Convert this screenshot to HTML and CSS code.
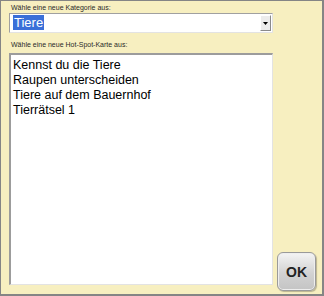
FILE: index.html
```html
<!DOCTYPE html>
<html lang="de">
<head>
  <meta charset="UTF-8">
  <title>Hot-Spot-Karte wählen</title>
  <link rel="stylesheet" href="styles.css">
</head>
<body>
  <div class="dialog">
    <label class="caption">Wähle eine neue Kategorie aus:</label>
    <div class="combo">
      <span class="combo-value"><span class="selected">Tiere</span></span>
      <span class="combo-button">
        <svg viewBox="0 0 5 3" width="5" height="3"><path d="M0 0h5L2.5 3z" fill="#000"/></svg>
      </span>
    </div>

    <label class="caption second">Wähle eine neue Hot-Spot-Karte aus:</label>
    <div class="body-row">
      <ul class="listbox">
        <li>Kennst du die Tiere</li>
        <li>Raupen unterscheiden</li>
        <li>Tiere auf dem Bauernhof</li>
        <li>Tierrätsel 1</li>
      </ul>
      <button class="ok-button">OK</button>
    </div>
  </div>
</body>
</html>
```

FILE: styles.css
```css
body {
  margin: 0;
  font-family: 'Liberation Sans', Arial, sans-serif;
}

.dialog {
  width: 324px;
  height: 296px;
  box-sizing: border-box;
  background-color: #f7efc0;
  border-top: 1px solid #858585;
  border-left: 1px solid #858585;
  border-right: 2px solid #858585;
  border-bottom: 2px solid #858585;
  padding-left: 8px;
  display: flex;
  flex-direction: column;
}

.caption {
  display: block;
  font-size: 7px;
  color: #2a2a2a;
  margin: 3px 0 0 2px;
  line-height: 8px;
}

.caption.second {
  margin-top: 8px;
}

.combo {
  display: flex;
  align-items: center;
  width: 264px;
  height: 20px;
  margin-top: 1px;
  box-sizing: border-box;
  background: white;
  border-top: 1px solid #a0a0a0;
  border-left: 1px solid #a0a0a0;
  border-right: 1px solid #e3e3e3;
  border-bottom: 1px solid #e3e3e3;
}

.combo-value {
  flex: 1;
  padding-left: 3px;
  font-size: 13px;
  line-height: 14px;
}

.selected {
  background-color: #3a6fd8;
  color: white;
  padding: 0 1px;
}

.combo-button {
  width: 11px;
  height: 16px;
  margin-right: 1px;
  display: flex;
  align-items: center;
  justify-content: center;
  background: #ececec;
  border-right: 1px solid #8a8a8a;
  border-bottom: 1px solid #8a8a8a;
  border-top: 1px solid #fff;
  border-left: 1px solid #fff;
  box-sizing: border-box;
}

.body-row {
  display: flex;
  align-items: flex-start;
  margin-top: 4px;
}

.listbox {
  list-style: none;
  margin: 0;
  padding: 3px 0 0 2px;
  width: 264px;
  height: 232px;
  box-sizing: border-box;
  background: white;
  border-top: 2px solid #9c9c9c;
  border-left: 2px solid #9c9c9c;
  border-right: 1px solid #e3e3e3;
  border-bottom: 1px solid #e3e3e3;
  font-size: 12.5px;
  line-height: 15px;
  color: #000;
}

.ok-button {
  width: 39px;
  height: 39px;
  margin: 199px 0 0 4px;
  border: 1px solid #9a9a9a;
  border-radius: 6px;
  background: linear-gradient(#f4f4f4, #d2d2d2 55%, #c4c4c4);
  box-shadow: inset 0 0 0 1px #eee, 1px 1px 1px rgba(0, 0, 0, 0.25);
  font-family: 'Liberation Sans', Arial, sans-serif;
  font-weight: bold;
  font-size: 14px;
  color: #222;
  padding: 0;
}
```
